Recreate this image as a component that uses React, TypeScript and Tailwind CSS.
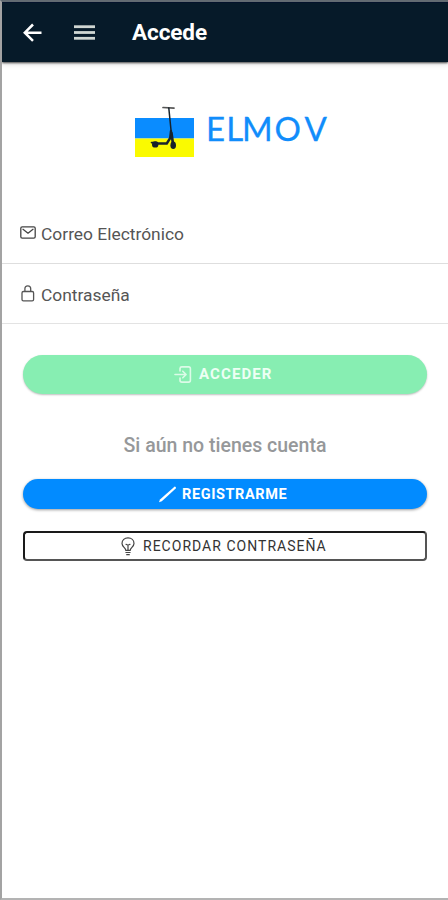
import React from "react";

function BackIcon() {
  return (
    <svg width="20" height="20" viewBox="0 0 20 20" fill="none" stroke="#fff" strokeWidth="2.5" className="block">
      <path d="M19.5 9.7H3M11 1.5L2.8 9.7L11 17.9" />
    </svg>
  );
}

function MenuIcon() {
  return (
    <svg width="21" height="15" viewBox="0 0 21 15" fill="#cfd6d2" className="block">
      <rect y="0.3" width="21" height="2.8" />
      <rect y="6.1" width="21" height="2.8" />
      <rect y="11.9" width="21" height="2.8" />
    </svg>
  );
}

function Logo() {
  return (
    <svg width="200" height="56" viewBox="0 0 200 56" className="block">
      <rect x="3" y="14" width="59" height="20.5" fill="#0a8cff" />
      <rect x="3" y="34.5" width="59" height="18.5" fill="#fafa00" />
      <g fill="none" stroke="#17232d" strokeLinecap="round" strokeLinejoin="round">
        <path d="M31 3.5L42 4.2" stroke="#555" strokeWidth="1.7" />
        <path d="M36.8 4L39.5 31" strokeWidth="1.5" />
        <path d="M39 27L38.2 34L34.8 39.5H24" strokeWidth="2.4" />
        <path d="M39.5 29L41 40" strokeWidth="2.6" />
        <path d="M19.5 38.6H25" strokeWidth="1.6" />
      </g>
      <circle cx="23.2" cy="40.4" r="3.2" fill="#17202a" />
      <ellipse cx="41.2" cy="41.2" rx="2.8" ry="3.8" fill="#17202a" />
      <text x="74 94.2 110 142.4 172.4" y="36.8" fontSize="33" fontFamily="Lato, sans-serif" fill="#118dfb" stroke="#118dfb" strokeWidth="0.3">
        ELMOV
      </text>
    </svg>
  );
}

function MailIcon() {
  return (
    <svg width="16" height="13" viewBox="0 0 16 13" fill="none" stroke="#444" strokeWidth="1.3" className="block">
      <rect x="0.8" y="0.8" width="14.4" height="11.4" rx="1.4" />
      <path d="M3 3.3L8 7.2L13 3.3" strokeLinecap="round" strokeLinejoin="round" />
    </svg>
  );
}

function LockIcon() {
  return (
    <svg width="14" height="17" viewBox="0 0 14 17" fill="none" stroke="#555" strokeWidth="1.3" className="block">
      <rect x="1" y="6.5" width="11.6" height="9.4" rx="1.4" />
      <path d="M3.9 6.5V3.7a2.9 2.9 0 0 1 5.8 0V6.5" />
    </svg>
  );
}

function EnterIcon() {
  return (
    <svg width="18" height="17" viewBox="0 0 18 17" fill="none" stroke="#dcfbe8" strokeWidth="1.6" strokeLinecap="round" strokeLinejoin="round" className="block">
      <path d="M6 5V2.6A1.8 1.8 0 0 1 7.8 0.9H14.6A1.8 1.8 0 0 1 16.4 2.7V14.3A1.8 1.8 0 0 1 14.6 16.1H7.8A1.8 1.8 0 0 1 6 14.3V12" />
      <path d="M1 8.5H12M8.8 5.2L12.1 8.5L8.8 11.8" />
    </svg>
  );
}

function PencilIcon() {
  return (
    <svg width="18" height="17" viewBox="0 0 18 17" fill="#fff" className="block">
      <path d="M0 16.3L1 13.6L15.7 0.6Q17.2 0.9 17 2.3L2.8 15.3Z" />
    </svg>
  );
}

function BulbIcon() {
  return (
    <svg width="14" height="19" viewBox="0 0 14 19" fill="none" stroke="#444" strokeWidth="1.2" strokeLinecap="round" strokeLinejoin="round" className="block">
      <path d="M4.8 13.4C4.8 10.8 1 9.8 1 6.5C1 3.1 3.6 0.9 7 0.9S13 3.1 13 6.5C13 9.8 9.2 10.8 9.2 13.4Z" />
      <path d="M7 13V8M5 7.3Q7 8.7 9 7.3M4.9 15.5H9.1M5.7 17.7H8.3" />
    </svg>
  );
}

export default function App() {
  return (
    <div className="flex h-[900px] w-[448px] flex-col overflow-hidden border-t-2 border-b-2 border-l-2 border-t-[#626b72] border-b-[#b3b3b3] border-l-[#a3a3a3] bg-white font-[Roboto,sans-serif]">
      <header className="flex h-[60px] shrink-0 items-center border-t border-[#03122b] bg-[#061a29] pl-5 text-white shadow-[0_1px_2px_rgba(0,0,0,0.7),0_3px_5px_rgba(0,0,0,0.1)]">
        <BackIcon />
        <div className="ml-8">
          <MenuIcon />
        </div>
        <h1 className="ml-[37px] text-[22.5px] leading-none font-bold tracking-[-0.1px]">Accede</h1>
      </header>

      <main className="flex flex-col">
        <div className="mt-[42px] ml-[130px]">
          <Logo />
        </div>

        <div className="mt-11 flex h-[60px] items-center border-b border-[#dedede] pl-[18px] text-[#555]">
          <div className="-mt-[3px]">
            <MailIcon />
          </div>
          <span className="ml-[5px] pt-[2px] text-[17.4px] leading-none">Correo Electrónico</span>
        </div>
        <div className="flex h-[60px] items-center border-b border-[#e3e3e3] pl-[19px] text-[#555]">
          <div className="-mt-[1px]">
            <LockIcon />
          </div>
          <span className="ml-1.5 pt-1 text-[17.4px] leading-none">Contraseña</span>
        </div>

        <div className="flex flex-col pr-[21px] pl-[21px]">
          <button className="mt-[31px] flex h-[39px] items-center rounded-full bg-[#87eeb2] pl-[151px] text-[15px] font-bold tracking-[1.1px] text-[#edfff4] shadow-[0_1px_2px_rgba(0,0,0,0.25)]">
            <EnterIcon />
            <span className="ml-[7px]">ACCEDER</span>
          </button>
          <p className="mt-10 text-center text-[19.5px] leading-6 font-medium text-[#96989a]">Si aún no tienes cuenta</p>
          <button className="mt-[21px] flex h-[30px] items-center rounded-full bg-[#028bff] pl-[136px] text-[14.5px] font-bold tracking-[0.6px] text-white shadow-[0_1px_3px_rgba(0,0,0,0.4)]">
            <PencilIcon />
            <span className="ml-[5px] pt-px">REGISTRARME</span>
          </button>
          <button className="mt-[22px] flex h-[30px] items-center rounded-[4px] border-2 border-[#555] border-t-[#1a1a1a] border-l-[#1a1a1a] pl-[96px] text-[14px] tracking-[1.02px] text-[#333]">
            <BulbIcon />
            <span className="ml-2">RECORDAR CONTRASEÑA</span>
          </button>
        </div>
      </main>
    </div>
  );
}
